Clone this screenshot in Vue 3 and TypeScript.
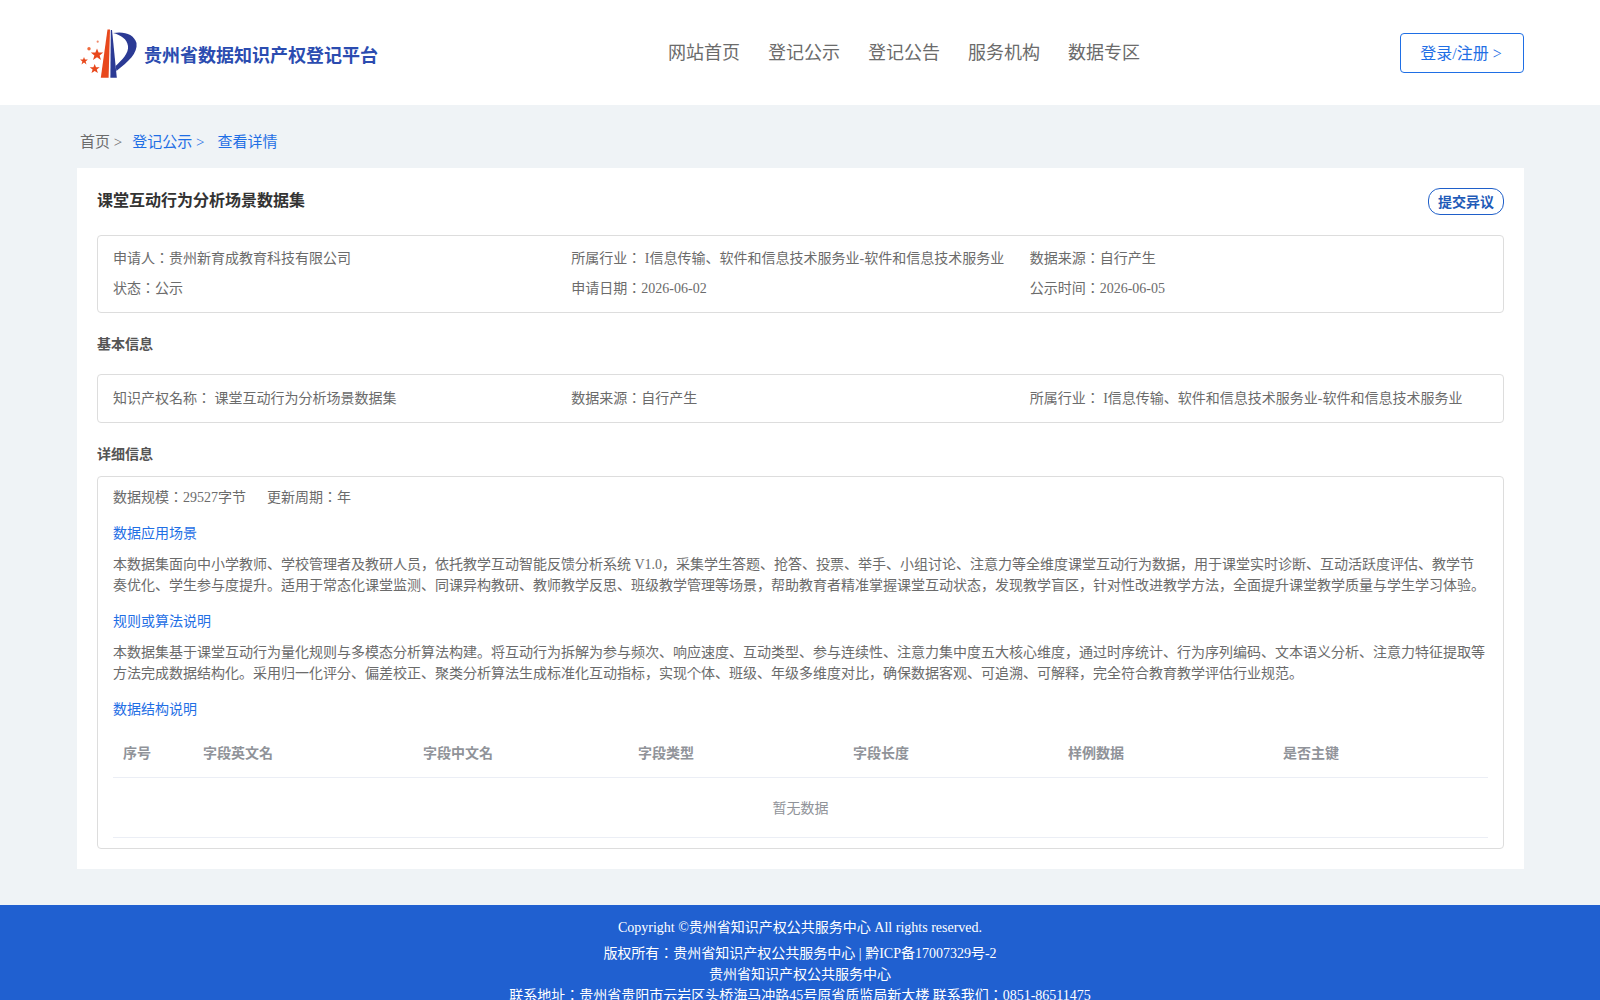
<script setup lang="ts">
const nav = ['网站首页', '登记公示', '登记公告', '服务机构', '数据专区']
const cols = ['序号', '字段英文名', '字段中文名', '字段类型', '字段长度', '样例数据', '是否主键']
</script>

<template>
  <div class="page">
    <header class="header">
      <div class="brand">
        <svg class="logo" viewBox="0 0 58 50" width="58" height="50">
          <polygon fill="#e8481c" points="27.5,0.5 30,0.5 28.6,48.8 20.8,48.8" />
          <polygon fill="#2b3a94" points="30.8,1 32,1 36.8,48.8 30.4,48.8" />
          <path fill="#2b3a94" d="M33 4 C44 2 54 5 56.5 14 C58 24 48 33 36.4 42 L35.6 37 C42 31 49 24 48 17 C47 10 41 6 33 4 Z" />
          <polygon fill="#e8481c" points="17,19.5 18.6,23.6 23.2,23.6 19.6,26.4 21,31 17,28.3 13,31 14.4,26.4 10.8,23.6 15.4,23.6" />
          <polygon fill="#e8481c" points="4,28 5,30.6 7.9,30.6 5.6,32.4 6.5,35.4 4,33.6 1.5,35.4 2.4,32.4 0.1,30.6 3,30.6" />
          <polygon fill="#e8481c" points="14.7,35 16,38.3 19.7,38.3 16.8,40.5 17.9,44 14.7,41.9 11.5,44 12.6,40.5 9.7,38.3 13.4,38.3" />
          <circle cx="9" cy="19.7" r="1.7" fill="#ef6a3c" />
          <circle cx="17.7" cy="12.7" r="1.1" fill="#f0896a" />
        </svg>
        <span class="brand-name">贵州省数据知识产权登记平台</span>
      </div>
      <nav class="nav">
        <a v-for="n in nav" :key="n">{{ n }}</a>
      </nav>
      <button class="login">登录/注册 &gt;</button>
    </header>

    <main class="main">
      <div class="crumbs">
        <span class="c1">首页 &gt;</span>
        <span class="c2">登记公示 &gt;</span>
        <span class="c3">查看详情</span>
      </div>
      <section class="card">
        <div class="title-row">
          <h1>课堂互动行为分析场景数据集</h1>
          <button class="objection">提交异议</button>
        </div>
        <div class="box grid-box summary">
          <div>申请人：贵州新育成教育科技有限公司</div>
          <div>所属行业： I信息传输、软件和信息技术服务业-软件和信息技术服务业</div>
          <div>数据来源：自行产生</div>
          <div>状态：公示</div>
          <div>申请日期：2026-06-02</div>
          <div>公示时间：2026-06-05</div>
        </div>
        <h2 class="h-basic">基本信息</h2>
        <div class="box grid-box basic">
          <div>知识产权名称： 课堂互动行为分析场景数据集</div>
          <div>数据来源：自行产生</div>
          <div>所属行业： I信息传输、软件和信息技术服务业-软件和信息技术服务业</div>
        </div>
        <h2 class="h-detail">详细信息</h2>
        <div class="box detail">
          <div class="meta"><span>数据规模：29527字节</span><span>更新周期：年</span></div>
          <h3>数据应用场景</h3>
          <p>本数据集面向中小学教师、学校管理者及教研人员，依托教学互动智能反馈分析系统 V1.0，采集学生答题、抢答、投票、举手、小组讨论、注意力等全维度课堂互动行为数据，用于课堂实时诊断、互动活跃度评估、教学节奏优化、学生参与度提升。适用于常态化课堂监测、同课异构教研、教师教学反思、班级教学管理等场景，帮助教育者精准掌握课堂互动状态，发现教学盲区，针对性改进教学方法，全面提升课堂教学质量与学生学习体验。</p>
          <h3>规则或算法说明</h3>
          <p>本数据集基于课堂互动行为量化规则与多模态分析算法构建。将互动行为拆解为参与频次、响应速度、互动类型、参与连续性、注意力集中度五大核心维度，通过时序统计、行为序列编码、文本语义分析、注意力特征提取等方法完成数据结构化。采用归一化评分、偏差校正、聚类分析算法生成标准化互动指标，实现个体、班级、年级多维度对比，确保数据客观、可追溯、可解释，完全符合教育教学评估行业规范。</p>
          <h3>数据结构说明</h3>
          <table>
            <thead>
              <tr><th v-for="c in cols" :key="c">{{ c }}</th></tr>
            </thead>
            <tbody>
              <tr><td colspan="7">暂无数据</td></tr>
            </tbody>
          </table>
        </div>
      </section>
    </main>

    <footer class="footer">
      <div class="copy">Copyright ©贵州省知识产权公共服务中心 All rights reserved.</div>
      <div>版权所有：贵州省知识产权公共服务中心 | 黔ICP备17007329号-2</div>
      <div>贵州省知识产权公共服务中心</div>
      <div>联系地址：贵州省贵阳市云岩区头桥海马冲路45号原省质监局新大楼 联系我们：0851-86511475</div>
    </footer>
  </div>
</template>

<style scoped>
.page { font-family: "Liberation Serif", "Noto Sans CJK JP", serif; font-size: 14px; color: #6b6b6b; background: #eff3f6; }
.header { height: 105px; background: #fff; display: flex; align-items: center; padding: 0 76px 0 80px; box-sizing: border-box; }
.brand { display: flex; align-items: center; gap: 6px; }
.logo { display: block; margin-top: 3px; }
.brand-name { font-size: 18px; font-weight: 700; color: #2b4cb0; margin-top: 2px; }
.nav { display: flex; gap: 28px; font-size: 18px; color: #6b6b6b; margin-left: 290px; margin-bottom: 4px; }
.login { margin-left: auto; width: 124px; height: 40px; border: 1px solid #1f6fe5; border-radius: 4px; background: #fff; color: #1f6fe5; font: inherit; font-size: 16px; padding: 0 2px 2px 0; }
.main { padding: 0 76px 36px 77px; }
.crumbs { height: 63px; display: flex; align-items: center; font-size: 15px; padding-left: 3px; padding-top: 7px; box-sizing: border-box; }
.c1 { margin-right: 10px; }
.c2 { color: #1f6fe5; margin-right: 13px; }
.c3 { color: #1f6fe5; }
.card { background: #fff; padding: 20px; height: 701px; box-sizing: border-box; }
.title-row { display: flex; justify-content: space-between; align-items: flex-start; height: 47px; }
h1 { margin: 3px 0 0; font-size: 16px; font-weight: 700; color: #333; line-height: 20px; }
.objection { width: 76px; height: 27px; border: 1px solid #1f5fc9; border-radius: 12px; background: #fff; color: #1f5bb8; font: inherit; font-size: 14px; font-weight: 700; padding: 0 0 2px; }
.box { border: 1px solid #ddd; border-radius: 4px; box-sizing: border-box; }
.grid-box { display: grid; grid-template-columns: repeat(3, 1fr); padding: 0 15px; align-items: center; }
.summary { height: 78px; grid-auto-rows: 30px; align-content: center; padding-bottom: 4px; }
.basic { height: 49px; padding-bottom: 3px; }
h2 { margin: 0; font-size: 14px; font-weight: 700; color: #555; line-height: 20px; }
.h-basic { margin-top: 22px; margin-bottom: 19px; }
.h-detail { margin-top: 22px; margin-bottom: 11px; }
.detail { height: 373px; padding: 0 15px; }
.meta { display: flex; gap: 21px; margin-top: 10px; line-height: 21px; }
h3 { margin: 15px 0 0; font-size: 14px; font-weight: 400; color: #1f6fe5; line-height: 21px; }
p { margin: 10px 0 0; line-height: 21px; }
table { width: 100%; border-collapse: collapse; table-layout: fixed; margin-top: 7px; }
th { text-align: left; padding: 0 10px; height: 50px; font-weight: 700; color: #909399; border-bottom: 1px solid #ebeef5; box-sizing: border-box; width: 215px; }
th:first-child { width: 80px; }
th:nth-child(2) { width: 220px; }
td { text-align: center; height: 60px; color: #909399; border-bottom: 1px solid #ebeef5; box-sizing: border-box; }
.footer { background: #2060d0; color: #fff; text-align: center; line-height: 21px; height: 95px; overflow: hidden; padding-top: 12px; box-sizing: border-box; }
.copy { margin-bottom: 5px; }
</style>
<style>
html, body { margin: 0; background: #eff3f6; }
</style>
